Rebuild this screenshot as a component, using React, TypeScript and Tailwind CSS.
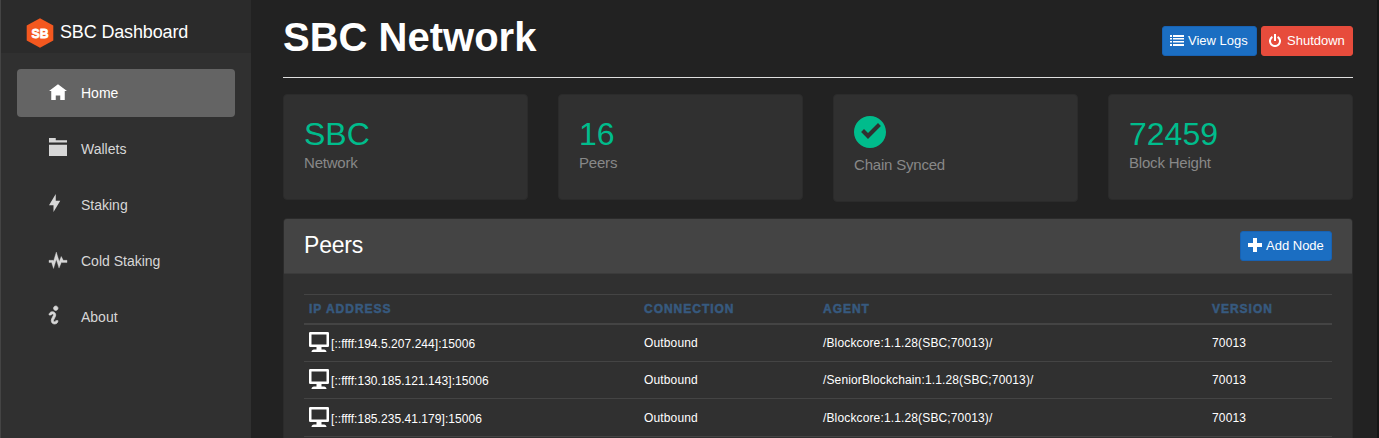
import React from "react";

const ICONS = {
  home: "M4 0l-4 3h1v4h2v-2h2v2h2v-4.03l1 .03-4-3z",
  folder: "M0 0v2h8v-1h-5v-1h-3zm0 3v5h8v-5h-8z",
  bolt: "M3 0l-3 5h2v3l3-5h-2v-3z",
  pulse:
    "M3.25 0l-.47 1.53-.78 2.56-.03-.06-.09-.34h-1.88v1h1.16l.38 1.16.47 1.47.47-1.5.78-2.5.78 2.5.41 1.34.53-1.28.59-1.47.13.28h2.31v-1h-1.69l-.38-.75-.5-.97-.41 1.03-.47 1.19-.84-2.66-.47-1.53z",
  info: "M3 0c-.55 0-1 .45-1 1s.45 1 1 1 1-.45 1-1-.45-1-1-1zm-1.5 2.5c-.83 0-1.5.67-1.5 1.5h1c0-.28.22-.5.5-.5s.5.22.5.5-1 1.64-1 2.5c0 .86.67 1.5 1.5 1.5s1.5-.67 1.5-1.5h-1c0 .28-.22.5-.5.5s-.5-.22-.5-.5c0-.36 1-1.84 1-2.5 0-.81-.67-1.5-1.5-1.5z",
  monitor:
    "M.34 0a.5.5 0 0 0-.34.5v5a.5.5 0 0 0 .5.5h2.5v1h-1c-.55 0-1 .45-1 1h6c0-.55-.45-1-1-1h-1v-1h2.5a.5.5 0 0 0 .5-.5v-5a.5.5 0 0 0-.5-.5h-7.16zm.66 1h6v4h-6v-4z",
  check:
    "M4 0c-2.2 0-4 1.8-4 4s1.8 4 4 4 4-1.8 4-4-1.8-4-4-4zm2 1.78l.72.72-3.22 3.22-1.72-1.72.72-.72 1 1 2.5-2.5z",
};

function Icon({ name, className }: { name: keyof typeof ICONS; className: string }) {
  return (
    <svg viewBox="0 0 8 8" fill="currentColor" className={"shrink-0 overflow-visible " + className}>
      <path fillRule="evenodd" d={ICONS[name]} />
    </svg>
  );
}

const NAV: { icon: keyof typeof ICONS; label: string; active?: boolean; iconClass: string }[] = [
  { icon: "home", label: "Home", active: true, iconClass: "translate-y-[2.25px]" },
  { icon: "folder", label: "Wallets", iconClass: "" },
  { icon: "bolt", label: "Staking", iconClass: "" },
  { icon: "pulse", label: "Cold Staking", iconClass: "translate-y-[2px] stroke-current stroke-[0.15]" },
  { icon: "info", label: "About", iconClass: "stroke-current stroke-[0.3]" },
];

const PEERS = [
  { ip: "[::ffff:194.5.207.244]:15006", agent: "/Blockcore:1.1.28(SBC;70013)/", h: "h-[37px]" },
  { ip: "[::ffff:130.185.121.143]:15006", agent: "/SeniorBlockchain:1.1.28(SBC;70013)/", h: "h-[37px]" },
  { ip: "[::ffff:185.235.41.179]:15006", agent: "/Blockcore:1.1.28(SBC;70013)/", h: "h-[38px]" },
];

const COLS = "grid grid-cols-[335px_179px_389px_1fr] pl-[5px]";

function Stat({ label, children, tall }: { label: string; children: React.ReactNode; tall?: boolean }) {
  return (
    <div
      className={
        "rounded border border-[#2b2b2b] bg-[#303030] px-5 pt-5 " + (tall ? "h-[108px]" : "h-[106px]")
      }
    >
      {children}
      <div className="text-[15px] leading-[22px] tracking-[-0.2px] text-[#888888]">{label}</div>
    </div>
  );
}

const VALUE = "h-[37px] text-[32px] leading-[38px] text-[#00bc8c]";

export default function App() {
  return (
    <div className="flex h-[438px] w-[1379px] overflow-hidden bg-[#222222] font-['Liberation_Sans',Arial,sans-serif] text-white">
      <aside className="w-[251px] shrink-0 border-l border-[#444444] bg-[#303030]">
        <div className="flex h-[53px] items-center bg-[#2b2b2b] pt-[12px] pl-[25px]">
          <svg viewBox="0 0 28 30" className="h-[30px] w-7">
            <path d="M14 0.3L27.3 7.5v15L14 29.7.7 22.5v-15z" fill="#f4581f" />
            <text
              x="14"
              y="20"
              textAnchor="middle"
              textLength="17"
              lengthAdjust="spacingAndGlyphs"
              fill="#fff"
              stroke="#fff"
              strokeWidth="0.8"
              strokeLinejoin="round"
              fontSize="13.5"
              fontWeight="700"
              fontFamily="Liberation Sans"
            >
              SB
            </text>
          </svg>
          <span className="ml-[6px] pb-px text-lg leading-6 tracking-[-0.15px]">SBC Dashboard</span>
        </div>
        <nav className="flex flex-col gap-2 px-4 pt-4">
          {NAV.map((n) => (
            <div
              key={n.label}
              className={
                "flex h-12 items-center rounded pl-8 text-sm " +
                (n.active ? "bg-[#646464] text-white" : "text-[#d7d7d7]")
              }
            >
              <Icon name={n.icon} className={"mb-1 h-[18px] w-[18px] " + n.iconClass} />
              <span className="ml-[14px]">{n.label}</span>
            </div>
          ))}
        </nav>
      </aside>
      <main className="min-w-0 flex-1 border-r-2 border-[#161616] pr-6 pl-8">
        <header className="flex h-[78px] justify-between border-b border-[#dedede]">
          <h1 className="pt-[13px] text-[40px] leading-[48px] font-bold">SBC Network</h1>
          <div className="flex gap-1 pt-[26px] text-[13px]">
            <button className="flex h-[30px] w-[95px] items-center rounded-[3px] border border-[#1862b3] bg-[#1b6ec2] pl-[7px]">
              <svg viewBox="0 0 14 12" className="mr-1 h-3 w-[14px]" fill="currentColor">
                <path d="M0 0h2v2H0zM3 0h11v2H3zM0 3h2v1.6H0zM3 3h11v1.6H3zM0 6h2v1.6H0zM3 6h11v1.6H3zM0 9h2v2H0zM3 9h11v2H3z" />
              </svg>
              View Logs
            </button>
            <button className="flex h-[30px] w-[92px] items-center rounded-[3px] border border-[#e74c3c] bg-[#e74c3c] pl-[7px]">
              <svg viewBox="0 0 12 13" className="mr-[6px] mb-[2px] h-[13px] w-3" fill="none" stroke="currentColor" strokeWidth="2">
                <path d="M3.4 2.8a5 5 0 1 0 5.2 0M6 0v7" />
              </svg>
              Shutdown
            </button>
          </div>
        </header>
        <div className="mt-4 grid grid-cols-4 items-start gap-[30px]">
          <Stat label="Network">
            <div className={VALUE}>SBC</div>
          </Stat>
          <Stat label="Peers">
            <div className={VALUE}>16</div>
          </Stat>
          <Stat label="Chain Synced" tall>
            <div className="h-[39px] pt-px text-[#00bc8c]">
              <Icon name="check" className="h-8 w-8" />
            </div>
          </Stat>
          <Stat label="Block Height">
            <div className={VALUE}>72459</div>
          </Stat>
        </div>
        <section className="mt-4 h-[240px] rounded border border-[#2b2b2b] bg-[#303030]">
          <div className="flex h-[55px] items-center justify-between rounded-t-[3px] border-b border-[#3b3b3b] bg-[#444444] px-5">
            <h2 className="pb-[3px] text-[23px] leading-7 tracking-[-0.2px]">Peers</h2>
            <button className="flex h-[30px] w-[92px] items-center rounded-[3px] border border-[#1862b3] bg-[#1b6ec2] pl-[7px] text-[13px]">
              <svg viewBox="0 0 14 14" className="mr-1 mb-[2px] h-[14px] w-[14px]" fill="currentColor">
                <path d="M5 0h4v5h5v4H9v5H5V9H0V5h5z" />
              </svg>
              Add Node
            </button>
          </div>
          <div className="px-5 pt-5 text-xs">
            <div
              className={
                COLS +
                " h-[31px] items-center border-t border-b-2 border-[#444444] font-black tracking-[0.98px] text-[#375a7f] [-webkit-text-stroke:0.5px_#375a7f]"
              }
            >
              <span>IP ADDRESS</span>
              <span>CONNECTION</span>
              <span>AGENT</span>
              <span>VERSION</span>
            </div>
            {PEERS.map((p) => (
              <div key={p.ip} className={COLS + " items-center border-b border-[#444444] tracking-[0.14px] " + p.h}>
                <span className="flex items-center">
                  <Icon name="monitor" className="mr-[2px] mb-[2px] h-5 w-5" />
                  <span className="pt-[2px] tracking-[0.05px]">{p.ip}</span>
                </span>
                <span>Outbound</span>
                <span>{p.agent}</span>
                <span>70013</span>
              </div>
            ))}
          </div>
        </section>
      </main>
    </div>
  );
}
